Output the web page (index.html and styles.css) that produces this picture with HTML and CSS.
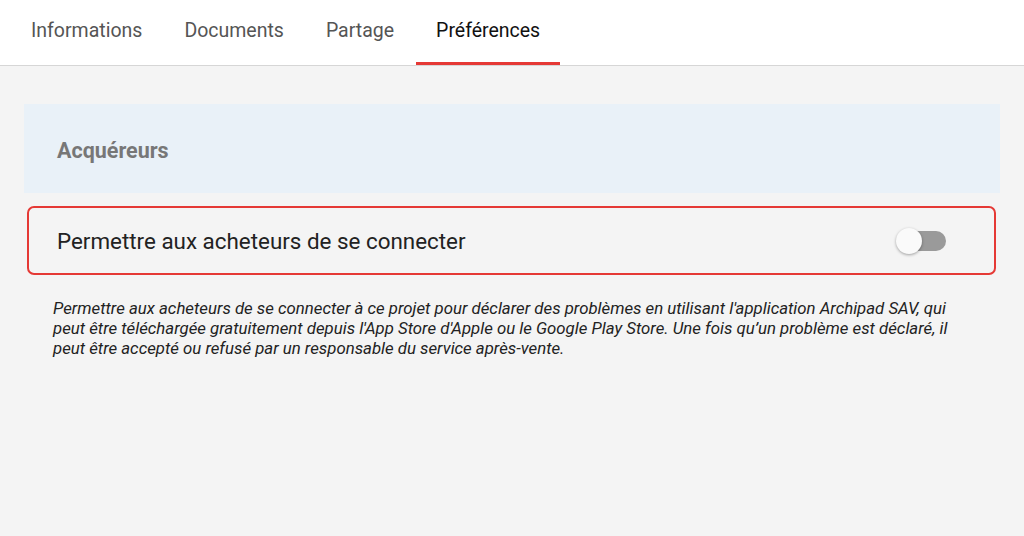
FILE: index.html
```html
<!DOCTYPE html>
<html lang="fr">
<head>
  <meta charset="UTF-8">
  <meta name="viewport" content="width=device-width, initial-scale=1.0">
  <title>Préférences</title>
  <link rel="stylesheet" href="styles.css">
</head>
<body>
  <nav class="tabs">
    <a class="tab">Informations</a>
    <a class="tab">Documents</a>
    <a class="tab">Partage</a>
    <a class="tab active">Préférences</a>
  </nav>

  <main class="content">
    <div class="section-header">Acquéreurs</div>

    <div class="setting-row">
      <span class="setting-label">Permettre aux acheteurs de se connecter</span>
      <label class="switch">
        <input type="checkbox">
        <span class="track"></span>
        <span class="knob"></span>
      </label>
    </div>

    <p class="hint">Permettre aux acheteurs de se connecter à ce projet pour déclarer des problèmes en utilisant l'application Archipad SAV, qui peut être téléchargée gratuitement depuis l'App Store d'Apple ou le Google Play Store. Une fois qu’un problème est déclaré, il peut être accepté ou refusé par un responsable du service après-vente.</p>
  </main>
</body>
</html>
```

FILE: styles.css
```css
body {
  margin: 0;
  font-family: Roboto, 'Noto Sans', sans-serif;
  background-color: #f4f4f4;
  color: #333;
}

.tabs {
  display: flex;
  height: 65px;
  padding-left: 11px;
  background: white;
  border-bottom: 1px solid #d6d6d6;
}
.tab {
  display: flex;
  align-items: center;
  padding: 0 20px 1px;
  margin-right: 2px;
  font-size: 19.5px;
  color: #555;
  border-bottom: 3px solid transparent;
  cursor: pointer;
}
.tab.active {
  color: #111;
  border-bottom-color: #e53935;
}

.content {
  padding: 38px 24px 0;
}

.section-header {
  display: flex;
  align-items: center;
  height: 89px;
  padding: 3px 0 0 33px;
  box-sizing: border-box;
  background: #e9f1f8;
  font-size: 21.5px;
  font-weight: 700;
  color: #777;
}

.setting-row {
  display: flex;
  align-items: center;
  justify-content: space-between;
  height: 65px;
  margin: 13px 4px 0 3px;
  padding: 0 48px 0 28px;
  border: 2px solid #e53935;
  border-radius: 7px;
}
.setting-label {
  font-size: 22.4px;
  color: #222;
}

.switch {
  position: relative;
  width: 50px;
  height: 28px;
  cursor: pointer;
}
.switch input {
  display: none;
}
.track {
  position: absolute;
  left: 6px;
  right: 0;
  top: 4px;
  height: 20px;
  border-radius: 10px;
  background: #9a9a9a;
}
.knob {
  position: absolute;
  left: 0;
  top: 1px;
  width: 26px;
  height: 26px;
  border-radius: 50%;
  background: #fafafa;
  box-shadow: 0 1px 3px rgba(0, 0, 0, 0.35);
}

.hint {
  margin: 23px 0 0 29px;
  max-width: 910px;
  font-size: 16.8px;
  font-style: italic;
  line-height: 20px;
  color: #222;
}
```
